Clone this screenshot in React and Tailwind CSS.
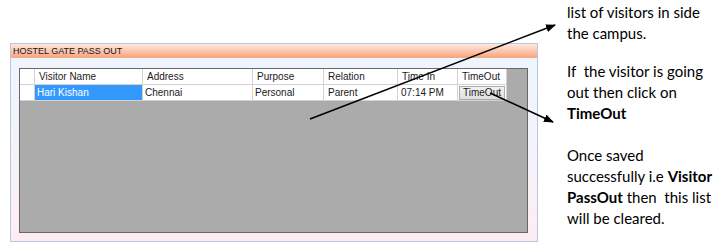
import React from 'react';

const columns = [
  { key: 'name', label: 'Visitor Name', width: 'w-[108px]' },
  { key: 'address', label: 'Address', width: 'w-[110px]' },
  { key: 'purpose', label: 'Purpose', width: 'w-[71px]' },
  { key: 'relation', label: 'Relation', width: 'w-[74px]' },
  { key: 'timeIn', label: 'Time In', width: 'w-[60px]' },
  { key: 'timeOut', label: 'TimeOut', width: 'w-[49px]' },
];

const visitors = [
  { name: 'Hari Kishan', address: 'Chennai', purpose: 'Personal', relation: 'Parent', timeIn: '07:14 PM' },
];

const GatePassWindow = () => (
  <div className="ml-[10px] mt-[43px] w-[528px] h-[199px] shrink-0 border border-[#b7c8e2] bg-gradient-to-b from-[#eef5fd] via-[#f4f3fa] to-[#fdedf3] flex flex-col">
    {/* title bar */}
    <div className="h-[14px] bg-gradient-to-b from-[#fde8dd] to-[#f8a37d] pl-[2px] text-[9px] leading-[14px] text-[#151515]">
      HOSTEL GATE PASS OUT
    </div>

    {/* grid */}
    <div className="mt-[10px] ml-[8px] w-[509px] h-[165px] border border-[#686868] bg-[#ababab] text-[10px] text-[#1b1b1b]">
      <div className="flex h-[16px]">
        <div className="w-[15px] bg-white border-r border-b border-[#d2d2d2]" />
        {columns.map(col => (
          <div
            key={col.key}
            className={`${col.width} bg-white border-r border-b border-[#d2d2d2] pl-[4px] leading-[15px]`}
          >
            {col.label}
          </div>
        ))}
      </div>

      {visitors.map(v => (
        <div key={v.name} className="flex h-[16px]">
          <div className="w-[15px] bg-white border-r border-b border-[#d2d2d2]" />
          <div className="w-[108px] bg-[#3399ff] text-white border-r border-b border-[#d2d2d2] pl-[2px] leading-[15px]">
            {v.name}
          </div>
          <div className="w-[110px] bg-white border-r border-b border-[#d2d2d2] pl-[2px] leading-[15px]">{v.address}</div>
          <div className="w-[71px] bg-white border-r border-b border-[#d2d2d2] pl-[2px] leading-[15px]">{v.purpose}</div>
          <div className="w-[74px] bg-white border-r border-b border-[#d2d2d2] pl-[4px] leading-[15px]">{v.relation}</div>
          <div className="w-[60px] bg-white border-r border-b border-[#d2d2d2] pl-[3px] leading-[15px]">{v.timeIn}</div>
          <div className="w-[49px] bg-white border-r border-b border-[#d2d2d2] flex items-center px-[1px]">
            <button className="w-full h-[14px] border border-[#adadad] bg-gradient-to-b from-[#f2f2f2] to-[#dedede] text-[10px] leading-[12px] text-[#1b1b1b]">
              TimeOut
            </button>
          </div>
        </div>
      ))}
    </div>
  </div>
);

const Notes = () => (
  <div className="ml-[29px] pt-[2px] font-['Lato',sans-serif] text-[15px] leading-[21px] text-black whitespace-pre">
    <p>list of visitors in side</p>
    <p>the campus.</p>

    <p className="mt-[17px]">If  the visitor is going</p>
    <p>out then click on</p>
    <p className="font-bold">TimeOut</p>

    <p className="mt-[21px]">Once saved</p>
    <p>successfully i.e <b>Visitor</b></p>
    <p><b>PassOut</b> then  this list</p>
    <p>will be cleared.</p>
  </div>
);

const App = () => {
  return (
    <div className="relative w-[726px] h-[252px] bg-white overflow-hidden flex font-['Liberation_Sans',Arial,sans-serif]">
      <GatePassWindow />
      <Notes />

      {/* callout arrows */}
      <svg className="absolute inset-0 pointer-events-none" width="726" height="252">
        <defs>
          <marker id="head" markerWidth="10" markerHeight="8" refX="9" refY="4" orient="auto" markerUnits="userSpaceOnUse">
            <path d="M0,0 L10,4 L0,8 Z" fill="#000" />
          </marker>
        </defs>
        <line x1="310" y1="119" x2="555" y2="25" stroke="#000" strokeWidth="1.6" markerEnd="url(#head)" />
        <line x1="490" y1="93" x2="553" y2="122" stroke="#000" strokeWidth="1.6" markerEnd="url(#head)" />
      </svg>
    </div>
  );
};

export default App;
